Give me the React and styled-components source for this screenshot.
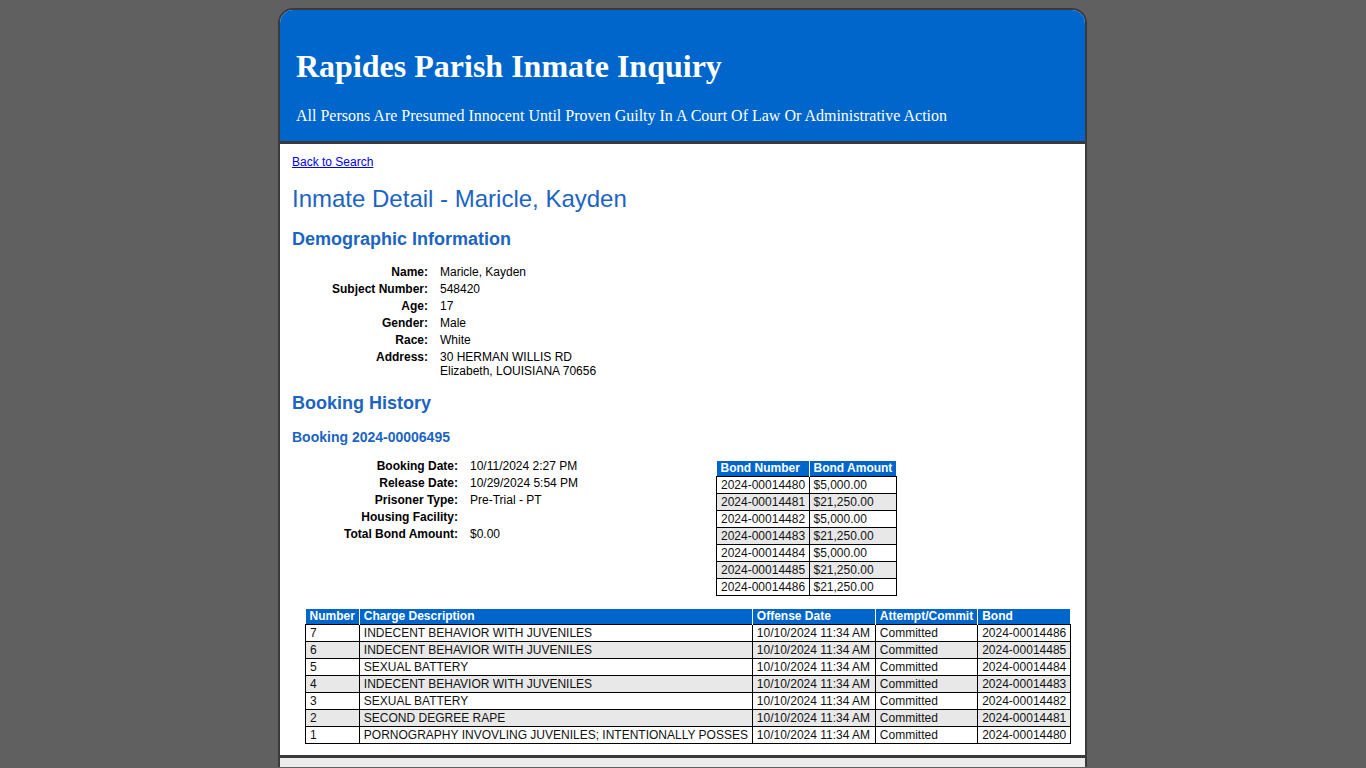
import React from "react";
import styled, { createGlobalStyle } from "styled-components";

const demographics = [
  ["Name:", "Maricle, Kayden"],
  ["Subject Number:", "548420"],
  ["Age:", "17"],
  ["Gender:", "Male"],
  ["Race:", "White"],
  ["Address:", "30 HERMAN WILLIS RD\nElizabeth, LOUISIANA 70656"],
];

const booking = [
  ["Booking Date:", "10/11/2024 2:27 PM"],
  ["Release Date:", "10/29/2024 5:54 PM"],
  ["Prisoner Type:", "Pre-Trial - PT"],
  ["Housing Facility:", ""],
  ["Total Bond Amount:", "$0.00"],
];

const bonds = [
  ["2024-00014480", "$5,000.00"],
  ["2024-00014481", "$21,250.00"],
  ["2024-00014482", "$5,000.00"],
  ["2024-00014483", "$21,250.00"],
  ["2024-00014484", "$5,000.00"],
  ["2024-00014485", "$21,250.00"],
  ["2024-00014486", "$21,250.00"],
];

const charges = [
  ["7", "INDECENT BEHAVIOR WITH JUVENILES", "2024-00014486"],
  ["6", "INDECENT BEHAVIOR WITH JUVENILES", "2024-00014485"],
  ["5", "SEXUAL BATTERY", "2024-00014484"],
  ["4", "INDECENT BEHAVIOR WITH JUVENILES", "2024-00014483"],
  ["3", "SEXUAL BATTERY", "2024-00014482"],
  ["2", "SECOND DEGREE RAPE", "2024-00014481"],
  ["1", "PORNOGRAPHY INVOVLING JUVENILES; INTENTIONALLY POSSES", "2024-00014480"],
];

const App = () => {
  return (
    <>
      <GlobalStyle />
      <Page>
        <Header>
          <Title>Rapides Parish Inmate Inquiry</Title>
          <Subtitle>
            All Persons Are Presumed Innocent Until Proven Guilty In A Court Of Law Or Administrative Action
          </Subtitle>
        </Header>

        <Content>
          <BackLink href="#">Back to Search</BackLink>
          <PageTitle>Inmate Detail - Maricle, Kayden</PageTitle>

          <SectionTitle>Demographic Information</SectionTitle>
          <InfoGrid labelWidth={136}>
            {demographics.map(([label, value]) => (
              <React.Fragment key={label}>
                <Label>{label}</Label>
                <Value>{value}</Value>
              </React.Fragment>
            ))}
          </InfoGrid>

          <SectionTitle top={13}>Booking History</SectionTitle>
          <BookingTitle>Booking 2024-00006495</BookingTitle>

          <BookingRow>
            <BookingInfo>
              <InfoGrid labelWidth={166}>
                {booking.map(([label, value]) => (
                  <React.Fragment key={label}>
                    <Label>{label}</Label>
                    <Value>{value}</Value>
                  </React.Fragment>
                ))}
              </InfoGrid>
            </BookingInfo>

            <BondTable>
              <thead>
                <tr>
                  <Th style={{ width: 84 }}>Bond Number</Th>
                  <Th style={{ width: 78 }}>Bond Amount</Th>
                </tr>
              </thead>
              <tbody>
                {bonds.map(([num, amount]) => (
                  <Tr key={num}>
                    <Td>{num}</Td>
                    <Td>{amount}</Td>
                  </Tr>
                ))}
              </tbody>
            </BondTable>
          </BookingRow>

          <ChargeTable>
            <thead>
              <tr>
                <Th style={{ width: 43 }}>Number</Th>
                <Th style={{ width: 384 }}>Charge Description</Th>
                <Th style={{ width: 114 }}>Offense Date</Th>
                <Th style={{ width: 92 }}>Attempt/Commit</Th>
                <Th style={{ width: 84 }}>Bond</Th>
              </tr>
            </thead>
            <tbody>
              {charges.map(([num, desc, bond]) => (
                <Tr key={num}>
                  <Td>{num}</Td>
                  <Td>{desc}</Td>
                  <Td>10/10/2024 11:34 AM</Td>
                  <Td>Committed</Td>
                  <Td>{bond}</Td>
                </Tr>
              ))}
            </tbody>
          </ChargeTable>
        </Content>

        <Footer />
      </Page>
    </>
  );
};

const GlobalStyle = createGlobalStyle`
  html, body {
    background: #606060;
  }
  body {
    margin: 8px 0 0;
    font-family: "Liberation Sans", Arial, sans-serif;
  }
`;

const Page = styled.div`
  width: 805px;
  margin-left: calc(50% - 405px);
  border: 2px solid #3a3a3a;
  border-bottom: none;
  border-radius: 15px 15px 0 0;
  background: #fff;
  overflow: hidden;
`;

const Header = styled.div`
  background: #0066cc;
  color: #fff;
  padding: 38px 16px 16px;
  border-bottom: 3px solid #3a3a3a;
  font-family: "Liberation Serif", "Times New Roman", serif;
`;

const Title = styled.h1`
  margin: 0;
  font-size: 32px;
  line-height: 37px;
  font-weight: bold;
`;

const Subtitle = styled.div`
  margin-top: 22px;
  font-size: 16px;
  line-height: 18px;
`;

const Content = styled.div`
  padding: 11px 12px 11px;
  color: #000;
`;

const BackLink = styled.a`
  display: block;
  width: max-content;
  font-size: 12px;
  line-height: 14px;
  color: #0000ee;
`;

const PageTitle = styled.h1`
  margin: 16px 0 0;
  font-size: 24px;
  line-height: 28px;
  font-weight: normal;
  color: #1c64c4;
`;

const SectionTitle = styled.h2`
  margin: ${(p) => p.top ?? 15}px 0 0;
  font-size: 18px;
  line-height: 22px;
  font-weight: bold;
  color: #1c64c4;
`;

const BookingTitle = styled.h3`
  margin: 15px 0 0;
  font-size: 14px;
  line-height: 17px;
  font-weight: bold;
  color: #1c64c4;
`;

const InfoGrid = styled.div`
  display: grid;
  grid-template-columns: ${(p) => p.labelWidth}px 1fr;
  column-gap: 12px;
  margin-top: 13px;
  font-size: 12px;
  line-height: 14px;
`;

const Label = styled.div`
  text-align: right;
  font-weight: bold;
  padding: 1.5px 0;
`;

const Value = styled.div`
  white-space: pre-line;
  padding: 1.5px 0;
`;

const BookingRow = styled.div`
  display: flex;
  align-items: flex-start;
  margin-top: -2px;
`;

const BookingInfo = styled.div`
  width: 424px;
`;

const BondTable = styled.table`
  border-collapse: collapse;
  margin-top: 17px;
  font-size: 12px;
  line-height: 14px;
`;

const ChargeTable = styled.table`
  border-collapse: collapse;
  margin: 13px 0 0 13px;
  font-size: 12px;
  line-height: 14px;
`;

const Th = styled.th`
  background: #0066cc;
  color: #fff;
  font-weight: bold;
  text-align: left;
  padding: 0 4px 1px;
  border-right: 1px solid #fff;
  white-space: nowrap;

  &:last-child {
    border-right: none;
  }
`;

const Tr = styled.tr`
  &:nth-child(even) {
    background: #e8e8e8;
  }
`;

const Td = styled.td`
  border: 1px solid #000;
  padding: 1px 3px 1px 4px;
  white-space: nowrap;
  color: #111;
`;

const Footer = styled.div`
  height: 9px;
  background: #ececec;
  border-top: 3px solid #3a3a3a;
`;

export default App;
